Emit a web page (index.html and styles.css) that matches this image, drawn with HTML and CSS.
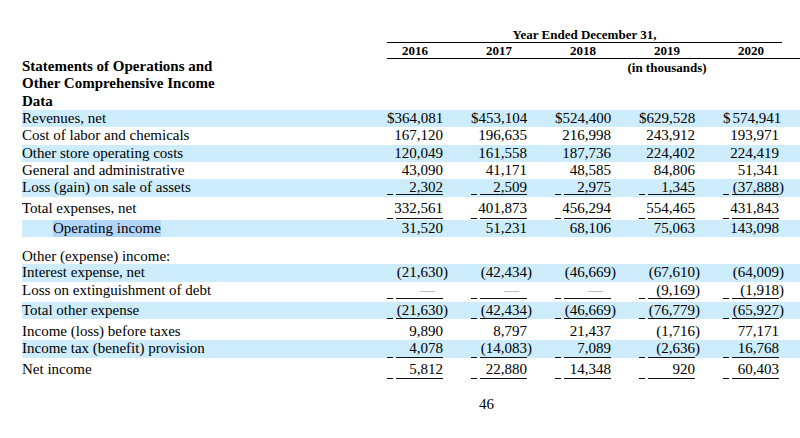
FILE: index.html
```html
<!DOCTYPE html>
<html lang="en">
<head>
<meta charset="utf-8">
<title>Statements of Operations</title>
<link rel="stylesheet" href="styles.css">
</head>
<body>
<div class="page">
  <div class="top">
    <div class="heading"><span class="heading-text">Statements of Operations and Other Comprehensive Income Data</span></div>
    <div class="colhead">
      <div class="span-title">Year Ended December 31,</div>
      <div class="years">
        <div>2016</div><div>2017</div><div>2018</div><div>2019</div><div>2020</div>
      </div>
      <div class="units">
        <div></div><div></div><div></div><div class="units-label">(in thousands)</div><div></div>
      </div>
    </div>
  </div>

  <div class="row band">
    <div class="lbl">Revenues, net</div>
    <div class="num">$364,081</div><div class="num">$453,104</div><div class="num">$524,400</div><div class="num">$629,528</div><div class="num">$<span class="sp"></span>574,941</div>
  </div>
  <div class="row">
    <div class="lbl">Cost of labor and chemicals</div>
    <div class="num">167,120</div><div class="num">196,635</div><div class="num">216,998</div><div class="num">243,912</div><div class="num">193,971</div>
  </div>
  <div class="row band">
    <div class="lbl">Other store operating costs</div>
    <div class="num">120,049</div><div class="num">161,558</div><div class="num">187,736</div><div class="num">224,402</div><div class="num">224,419</div>
  </div>
  <div class="row">
    <div class="lbl">General and administrative</div>
    <div class="num">43,090</div><div class="num">41,171</div><div class="num">48,585</div><div class="num">84,806</div><div class="num">51,341</div>
  </div>
  <div class="row band r-loss">
    <div class="lbl">Loss (gain) on sale of assets</div>
    <div class="num u">2,302</div><div class="num u">2,509</div><div class="num u">2,975</div><div class="num u">1,345</div><div class="num u">(37,888<span class="rp">)</span></div>
  </div>
  <div class="row r-totexp">
    <div class="lbl">Total expenses, net</div>
    <div class="num u">332,561</div><div class="num u">401,873</div><div class="num u">456,294</div><div class="num u">554,465</div><div class="num u">431,843</div>
  </div>
  <div class="row band">
    <div class="lbl indent"><span class="sel">Operating income</span></div>
    <div class="num">31,520</div><div class="num">51,231</div><div class="num">68,106</div><div class="num">75,063</div><div class="num">143,098</div>
  </div>
  <div class="row r-section">
    <div class="lbl">Other (expense) income:</div>
    <div></div><div></div><div></div><div></div><div></div>
  </div>
  <div class="row band r-interest">
    <div class="lbl">Interest expense, net</div>
    <div class="num">(21,630<span class="rp">)</span></div><div class="num">(42,434<span class="rp">)</span></div><div class="num">(46,669<span class="rp">)</span></div><div class="num">(67,610<span class="rp">)</span></div><div class="num">(64,009<span class="rp">)</span></div>
  </div>
  <div class="row r-ext">
    <div class="lbl">Loss on extinguishment of debt</div>
    <div class="num u"><span class="dash">—</span></div><div class="num u"><span class="dash">—</span></div><div class="num u"><span class="dash">—</span></div><div class="num u">(9,169<span class="rp">)</span></div><div class="num u">(1,918<span class="rp">)</span></div>
  </div>
  <div class="row band r-totother">
    <div class="lbl">Total other expense</div>
    <div class="num u">(21,630<span class="rp">)</span></div><div class="num u">(42,434<span class="rp">)</span></div><div class="num u">(46,669<span class="rp">)</span></div><div class="num u">(76,779<span class="rp">)</span></div><div class="num u">(65,927<span class="rp">)</span></div>
  </div>
  <div class="row r-before">
    <div class="lbl">Income (loss) before taxes</div>
    <div class="num">9,890</div><div class="num">8,797</div><div class="num">21,437</div><div class="num">(1,716<span class="rp">)</span></div><div class="num">77,171</div>
  </div>
  <div class="row band r-tax">
    <div class="lbl">Income tax (benefit) provision</div>
    <div class="num u">4,078</div><div class="num u">(14,083<span class="rp">)</span></div><div class="num u">7,089</div><div class="num u">(2,636<span class="rp">)</span></div><div class="num u">16,768</div>
  </div>
  <div class="row r-net">
    <div class="lbl">Net income</div>
    <div class="num u">5,812</div><div class="num u">22,880</div><div class="num u">14,348</div><div class="num u">920</div><div class="num u">60,403</div>
  </div>

  <div class="pageno">46</div>
</div>
</body>
</html>
```

FILE: styles.css
```css
* {
  box-sizing: border-box;
}

html, body {
  margin: 0;
  padding: 0;
  background: #ffffff;
}

body {
  width: 800px;
  height: 438px;
  overflow: hidden;
  font-family: "Liberation Serif", "Times New Roman", serif;
  color: #000000;
}

.page {
  padding-left: 22px;
  width: 800px;
}

/* ---------- top header ---------- */
.top {
  display: flex;
  align-items: flex-start;
}

.heading {
  width: 365px;
  flex: none;
  padding-top: 58px;
  font-size: 15px;
  font-weight: bold;
  line-height: 17.33px;
}

.heading-text {
  display: block;
  width: 215px;
}

.colhead {
  width: 413px;
  flex: none;
  padding-top: 27.6px;
  font-size: 13px;
  font-weight: bold;
}

.span-title {
  width: 395px;
  text-align: center;
  line-height: 14px;
  border-bottom: 1px solid #000;
}

.years,
.units {
  display: grid;
  grid-template-columns: repeat(5, 56px);
  column-gap: 28px;
  text-align: center;
  white-space: nowrap;
}

.years {
  line-height: 15.7px;
  border-bottom: 1px solid #000;
}

.units {
  padding-top: 2px;
  line-height: 14px;
}

.units-label {
  display: flex;
  justify-content: center;
}

/* ---------- data rows ---------- */
.row {
  display: grid;
  grid-template-columns: 337px repeat(5, 56px);
  column-gap: 28px;
  width: 778px;
  height: 17.33px;
  font-size: 15px;
  line-height: 17.33px;
  white-space: nowrap;
  --uy: 13px;
}

.band {
  background-color: #cdedfd;
}

.lbl {
  text-align: left;
}

.indent {
  padding-left: 31px;
}

.sel {
  display: inline-block;
  background-color: #b2d6fa;
  height: 17.33px;
}

.num {
  text-align: right;
}

.sp {
  display: inline-block;
  width: 2px;
}

.rp {
  margin-right: -5px;
}

.dash {
  color: #8c8c8c;
  margin-right: 8px;
}

.u {
  background-image: linear-gradient(to right, #111 0 6px, transparent 6px 9px, #111 9px 100%);
  background-repeat: no-repeat;
  background-size: 100% 1px;
  background-position: 0 var(--uy);
}

.r-loss {
  height: 17.5px;
  --uy: 15px;
}

.r-totexp {
  height: 23.3px;
  padding-top: 3.5px;
  --uy: 17.5px;
}

.r-section {
  height: 26.7px;
  padding-top: 10.7px;
}

.r-interest {
  height: 17.7px;
}

.r-ext {
  height: 20px;
  --uy: 16.5px;
}

.r-totother {
  height: 17.6px;
  --uy: 16.6px;
}

.r-before {
  height: 20.7px;
  padding-top: 4px;
}

.r-tax {
  height: 17.7px;
  --uy: 16.7px;
}

.r-net {
  height: 24px;
  padding-top: 3.5px;
  --uy: 17.1px;
}

.pageno {
  margin-top: 14.6px;
  padding-left: 457px;
  font-size: 15px;
  line-height: 17.33px;
}
```
